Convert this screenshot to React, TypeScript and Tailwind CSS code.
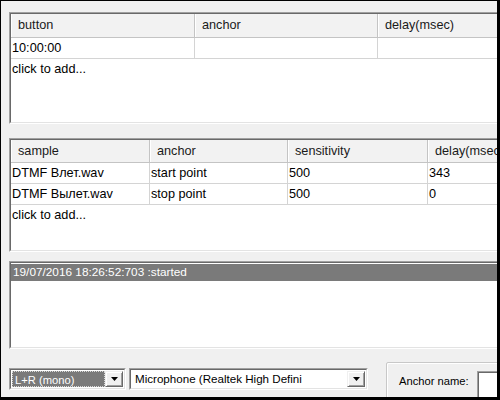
import React from "react";

function Sunken({ className, children }: { className: string; children?: React.ReactNode }) {
  return (
    <div className={"border border-t-[#a0a0a0] border-l-[#a0a0a0] border-r-white border-b-white " + className}>
      <div className="h-full border border-t-[#696969] border-l-[#696969] border-r-[#e3e3e3] border-b-[#e3e3e3] bg-white overflow-hidden">
        {children}
      </div>
    </div>
  );
}

function HeadCell({ w, children }: { w: string; children: React.ReactNode }) {
  return (
    <div className={"h-full shrink-0 border-r border-r-[#c4c4c4] shadow-[inset_1px_0_0_#ffffff] pl-[7px] leading-[22px] text-[#1a1a1a] whitespace-nowrap " + w}>
      {children}
    </div>
  );
}

function Cell({ w, children }: { w: string; children?: React.ReactNode }) {
  return (
    <div className={"h-full shrink-0 border-r border-r-[#d4d4d4] pl-[1px] leading-[20px] whitespace-nowrap " + w}>{children}</div>
  );
}

function DropBtn() {
  return (
    <div className="w-[18px] h-full shrink-0 bg-[#f0f0f0] border border-t-[#f0f0f0] border-l-[#f0f0f0] border-r-[#696969] border-b-[#696969] shadow-[inset_1px_1px_0_#ffffff,inset_-1px_-1px_0_#a0a0a0] flex items-center justify-center">
      <svg width="7" height="4" viewBox="0 0 7 4">
        <path d="M0 0H7L3.5 4Z" fill="#000" />
      </svg>
    </div>
  );
}

export default function App() {
  return (
    <div className="w-[500px] h-[400px] overflow-hidden bg-black">
      <div className="ml-[1px] mt-[1px] w-[496px] h-[396px] bg-[#f0f0f0] overflow-hidden flex flex-col pl-[8px] pt-[11px] text-[12.7px] text-black font-['Liberation_Sans',Arial,sans-serif]">
        {/* Table 1 */}
        <Sunken className="w-[560px] h-[112px] shrink-0">
          <div className="flex h-[24px] bg-[#f2f2f2] border-b border-b-[#c4c4c4]">
            <HeadCell w="w-[184px]">button</HeadCell>
            <HeadCell w="w-[183px]">anchor</HeadCell>
            <HeadCell w="w-[183px]">delay(msec)</HeadCell>
          </div>
          <div className="flex h-[21px] border-b border-b-[#d4d4d4]">
            <Cell w="w-[184px]">10:00:00</Cell>
            <Cell w="w-[183px]"></Cell>
            <Cell w="w-[183px]"></Cell>
          </div>
          <div className="pl-[1px] leading-[20px]">click to add...</div>
        </Sunken>

        {/* Table 2 */}
        <Sunken className="w-[560px] h-[114px] shrink-0 mt-[14px]">
          <div className="flex h-[23px] bg-[#f2f2f2] border-b border-b-[#c4c4c4]">
            <HeadCell w="w-[139px]">sample</HeadCell>
            <HeadCell w="w-[138px]">anchor</HeadCell>
            <HeadCell w="w-[140px]">sensitivity</HeadCell>
            <HeadCell w="w-[140px]">delay(msec)</HeadCell>
          </div>
          <div className="flex h-[21px] border-b border-b-[#d4d4d4]">
            <Cell w="w-[139px]">DTMF Влет.wav</Cell>
            <Cell w="w-[138px]">start point</Cell>
            <Cell w="w-[140px]">500</Cell>
            <Cell w="w-[140px]">343</Cell>
          </div>
          <div className="flex h-[21px] border-b border-b-[#d4d4d4]">
            <Cell w="w-[139px]">DTMF Вылет.wav</Cell>
            <Cell w="w-[138px]">stop point</Cell>
            <Cell w="w-[140px]">500</Cell>
            <Cell w="w-[140px]">0</Cell>
          </div>
          <div className="pl-[1px] leading-[20px]">click to add...</div>
        </Sunken>

        {/* Log */}
        <Sunken className="w-[560px] h-[88px] shrink-0 mt-[9px]">
          <div className="h-[17px] mt-[1px] bg-[#7a7a7a] text-white text-[11.8px] leading-[17px] pl-[2px]">19/07/2016 18:26:52:703 :started</div>
        </Sunken>

        {/* Bottom row */}
        <div className="flex items-start mt-[13px] shrink-0 w-[600px] text-[11.6px]">
          <Sunken className="w-[117px] h-[22px] mt-[6px] shrink-0">
            <div className="flex h-full p-[1px]">
              <div className="flex-1 bg-[#7a7a7a] border border-dotted border-[#d8d8d8] text-white text-[11.2px] leading-[16px] pl-[2px] whitespace-nowrap">L+R (mono)</div>
              <DropBtn />
            </div>
          </Sunken>
          <Sunken className="w-[239px] h-[22px] mt-[6px] ml-[3px] shrink-0">
            <div className="flex h-full p-[1px]">
              <div className="flex-1 leading-[16px] pl-[3px] whitespace-nowrap overflow-hidden">Microphone (Realtek High Defini</div>
              <DropBtn />
            </div>
          </Sunken>
          <div className="ml-[18px] w-[160px] h-[60px] shrink-0 border border-[#c8c8c8] rounded-[2px] shadow-[inset_1px_1px_0_#ffffff] flex items-start pt-[8px] pl-[12px]">
            <span className="leading-[18px] mt-[1px] text-[11.2px] whitespace-nowrap shrink-0">Anchor name:</span>
            <Sunken className="ml-[8px] w-[60px] h-[30px] shrink-0" />
          </div>
        </div>
      </div>
    </div>
  );
}
